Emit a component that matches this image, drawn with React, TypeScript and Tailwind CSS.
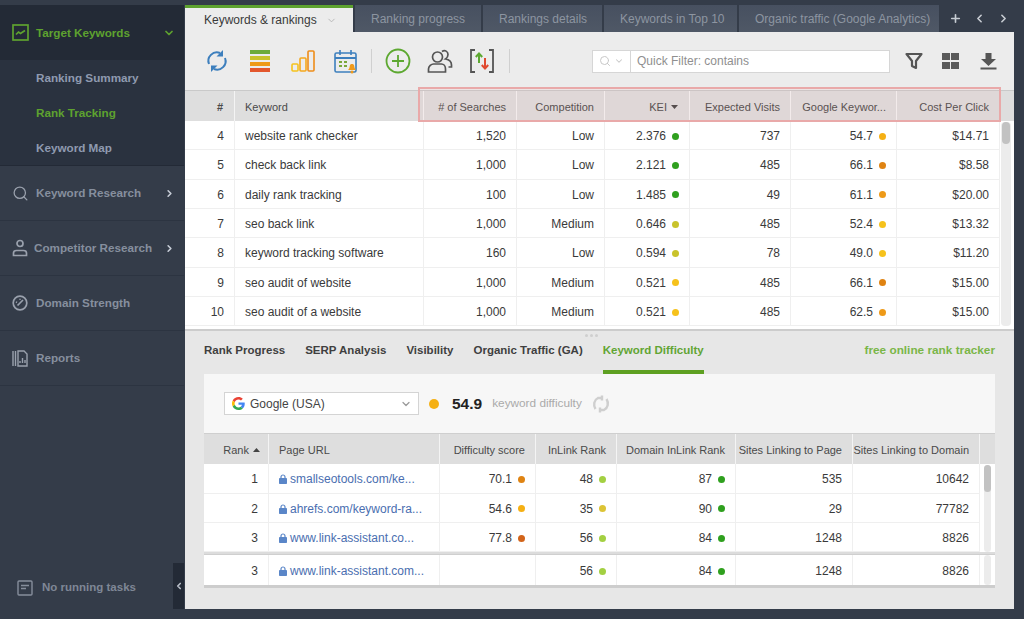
import { ChevronDown, ChevronRight, ChevronLeft, Plus, Search } from 'lucide-react';
import type { ReactNode } from 'react';

const GREEN = 'bg-[#2fa01e]';
const OLIVE = 'bg-[#c9c32c]';
const YELLOW = 'bg-[#f6c21c]';
const AMBER = 'bg-[#f5b014]';
const ORANGE = 'bg-[#ee9a18]';
const DARKORANGE = 'bg-[#df8312]';
const RUST = 'bg-[#d2641a]';
const LIME = 'bg-[#a3d042]';
const MUSTARD = 'bg-[#dcc436]';

const keywords = [
    { n: 4, k: 'website rank checker', s: '1,520', c: 'Low', kei: '2.376', kd: GREEN, v: '737', g: '54.7', gd: AMBER, cpc: '$14.71' },
    { n: 5, k: 'check back link', s: '1,000', c: 'Low', kei: '2.121', kd: GREEN, v: '485', g: '66.1', gd: DARKORANGE, cpc: '$8.58' },
    { n: 6, k: 'daily rank tracking', s: '100', c: 'Low', kei: '1.485', kd: GREEN, v: '49', g: '61.1', gd: ORANGE, cpc: '$20.00' },
    { n: 7, k: 'seo back link', s: '1,000', c: 'Medium', kei: '0.646', kd: OLIVE, v: '485', g: '52.4', gd: YELLOW, cpc: '$13.32' },
    { n: 8, k: 'keyword tracking software', s: '160', c: 'Low', kei: '0.594', kd: OLIVE, v: '78', g: '49.0', gd: YELLOW, cpc: '$11.20' },
    { n: 9, k: 'seo audit of website', s: '1,000', c: 'Medium', kei: '0.521', kd: YELLOW, v: '485', g: '66.1', gd: DARKORANGE, cpc: '$15.00' },
    { n: 10, k: 'seo audit of a website', s: '1,000', c: 'Medium', kei: '0.521', kd: YELLOW, v: '485', g: '62.5', gd: ORANGE, cpc: '$15.00' },
];

const pages = [
    { r: 1, u: 'smallseotools.com/ke...', d: '70.1', dd: DARKORANGE, i: '48', id: LIME, di: '87', p: '535', sd: '10642' },
    { r: 2, u: 'ahrefs.com/keyword-ra...', d: '54.6', dd: AMBER, i: '35', id: MUSTARD, di: '90', p: '29', sd: '77782' },
    { r: 3, u: 'www.link-assistant.co...', d: '77.8', dd: RUST, i: '56', id: LIME, di: '84', p: '1248', sd: '8826' },
];

const Dot = ({ color, size = 'w-[7px] h-[7px]' }: { color: string; size?: string }) => (
    <span className={`inline-block rounded-full ${size} ${color}`} />
);

const Cell = ({ w, children, left, head }: { w: string; children?: ReactNode; left?: boolean; head?: boolean }) => (
    <div
        className={`${w} shrink-0 h-full flex items-center gap-[6px] px-[10px] border-r whitespace-nowrap ${left ? 'justify-start' : 'justify-end'} ${
            head ? 'border-[#f4f4f4] pt-[2px]' : 'border-[#efefef] pt-[2px]'
        }`}
    >
        {children}
    </div>
);

const NavItem = ({ icon, label, arrow, tight }: { icon: ReactNode; label: string; arrow?: boolean; tight?: boolean }) => (
    <div className="h-[55px] flex items-center border-b border-[#2c3441] text-[#868f9e] font-bold">
        <div className="w-[36px] pl-[12px] shrink-0">{icon}</div>
        <span className={`flex-1 whitespace-nowrap ${tight ? '-ml-[2px]' : ''}`}>{label}</span>
        {arrow && <ChevronRight size={11} strokeWidth={3.5} className="mr-[9px] text-[#c6ccd6]" />}
    </div>
);

const Tab = ({ w, label }: { w: string; label: string }) => (
    <div className={`${w} h-[27px] shrink-0 bg-gradient-to-b from-[#475060] to-[#4f5866] text-[#8d95a1] flex items-center pl-[16px] whitespace-nowrap`}>
        {label}
    </div>
);

const Sep = () => <div className="w-px h-[24px] bg-[#d0d0d0]" />;

const LockIcon = () => (
    <svg width="8" height="10" viewBox="0 0 8 10" className="shrink-0 -mr-[3px]">
        <path d="M2 4.500V3a2 2 0 0 1 4 0v1.500" fill="none" stroke="#5a86c8" strokeWidth="1.200" />
        <rect x="0" y="4" width="8" height="6" rx="0.800" fill="#5a86c8" />
    </svg>
);

const Toolbar = () => (
    <div className="h-[58px] flex items-center bg-[#ececec] relative">
        <div className="w-[32px] ml-[16px] flex justify-center">
            <svg width="24" height="24" viewBox="0 0 24 24" fill="none" stroke="#3d7fbd" strokeWidth="2">
                <path d="M4 15a8.500 8.500 0 0 1 11-11" />
                <path d="M20 9a8.500 8.500 0 0 1-11 11" />
                <path d="M18 1v6.500h-6.500z" fill="#3d7fbd" stroke="none" />
                <path d="M6 23v-6.500h6.500z" fill="#3d7fbd" stroke="none" />
            </svg>
        </div>
        <div className="w-[20px] ml-[17px] flex flex-col gap-[2px]">
            <div className="h-[4px] bg-[#6cab3a]" />
            <div className="h-[4px] bg-[#c9c32c]" />
            <div className="h-[4px] bg-[#ee9a18]" />
            <div className="h-[4px] bg-[#e3572d]" />
        </div>
        <div className="ml-[21px] w-[24px]">
            <svg width="24" height="24" viewBox="0 0 24 24" fill="none" strokeWidth="1.600">
                <rect x="1" y="15" width="6" height="7" rx="1" stroke="#f5c21b" />
                <rect x="9" y="9" width="6" height="13" rx="1" stroke="#f5a81b" />
                <rect x="17" y="2" width="6" height="20" rx="1" stroke="#ee8d1a" />
            </svg>
        </div>
        <div className="ml-[19px] w-[24px]">
            <svg width="25" height="25" viewBox="0 0 25 25" fill="none">
                <rect x="1" y="4" width="21" height="19" rx="1.500" stroke="#3d7fbd" strokeWidth="1.600" />
                <path d="M1 9h21" stroke="#3d7fbd" strokeWidth="2" />
                <path d="M6 1v5M17 1v5" stroke="#3d7fbd" strokeWidth="1.600" />
                <path d="M5 12h3v2H5zM10 12h3v2h-3zM5 16h3v2H5zM10 16h3v2h-3z" fill="#7aa73c" />
                <path d="M14 21c1.500-1 1.500-3 2-5 .4-1.500 3.600-1.500 4 0 .5 2 .5 4 2 5z" fill="#ef9a1b" />
                <circle cx="18" cy="23" r="1.500" fill="#ef9a1b" />
            </svg>
        </div>
        <div className="ml-[13px]"><Sep /></div>
        <div className="ml-[13px] w-[26px]">
            <svg width="26" height="26" viewBox="0 0 26 26" fill="none" stroke="#5da831" strokeWidth="1.800">
                <circle cx="13" cy="13" r="11.500" />
                <path d="M13 7v12M7 13h12" />
            </svg>
        </div>
        <div className="ml-[16px] w-[26px]">
            <svg width="26" height="26" viewBox="0 0 26 26" fill="none" stroke="#555" strokeWidth="1.700">
                <circle cx="10.500" cy="9" r="5" />
                <path d="M1.500 24v-3c0-3 3-5 5-5h8c2 0 4 2 4 5v3z" />
                <path d="M15 3.500c3-2 6 0 6 3 0 2-1 3.500-2.500 4.500 3 .5 6 2.500 6 6v2h-3" />
            </svg>
        </div>
        <div className="ml-[16px] w-[26px]">
            <svg width="26" height="26" viewBox="0 0 26 26" fill="none" strokeWidth="2">
                <path d="M6 2H2v22h4M20 2h4v22h-4" stroke="#555" strokeWidth="1.800" />
                <path d="M10 15V5.500M6.800 9l3.200-3.500L13.200 9" stroke="#5da831" />
                <path d="M16 10v10.500M12.800 17l3.200 3.500 3.200-3.500" stroke="#e0492f" />
            </svg>
        </div>
        <div className="ml-[14px]"><Sep /></div>
        <div className="ml-[82px] w-[298px] h-[23px] flex bg-white border border-[#d6d6d6]">
            <div className="w-[38px] flex items-center justify-center gap-[3px] border-r border-[#d6d6d6] text-[#c8c8c8]">
                <Search size={12} strokeWidth={2} />
                <ChevronDown size={10} strokeWidth={2.500} />
            </div>
            <div className="flex items-center pl-[6px] text-[#8f8f8f]">Quick Filter: contains</div>
        </div>
        <div className="ml-[15px] w-[18px]">
            <svg width="18" height="18" viewBox="0 0 18 18" fill="none" stroke="#555" strokeWidth="2.200">
                <path d="M1.500 2h15L11 9v7l-4-2V9z" strokeLinejoin="round" />
            </svg>
        </div>
        <div className="ml-[19px] w-[18px] grid grid-cols-[7.500px_7.500px] grid-rows-[7px_7px] gap-[1.500px]">
            <div className="bg-[#5a5a5a]" /><div className="bg-[#5a5a5a]" /><div className="bg-[#5a5a5a]" /><div className="bg-[#5a5a5a]" />
        </div>
        <div className="ml-[20px] w-[17px]">
            <svg width="17" height="18" viewBox="0 0 17 18" fill="#555">
                <path d="M5.500 1h6v6h4.500l-7.500 7L1 7h4.500z" />
                <rect x="0.500" y="15.500" width="16" height="2" />
            </svg>
        </div>
    </div>
);

const kw = {
    n: 'w-[50px]', k: 'w-[189px]', s: 'w-[93px]', c: 'w-[88px]', kei: 'w-[85px]', v: 'w-[101px]', g: 'w-[106px]', cpc: 'w-[103px]',
};
const pg = {
    r: 'w-[65px]', u: 'w-[171px]', d: 'w-[96px]', i: 'w-[81px]', di: 'w-[119px]', p: 'w-[117px]', sd: 'w-[127px]',
};

const KeywordsTable = () => (
    <div className="relative">
        <div className="h-[31px] flex bg-[#dedede] border-t border-[#c9c9c9] text-[#4a4a4a] text-[11px]">
            <Cell w={kw.n} head><span className="font-bold pr-[1px]">#</span></Cell>
            <Cell w={kw.k} left head>Keyword</Cell>
            <Cell w={kw.s} head>&#35; of Searches</Cell>
            <Cell w={kw.c} head>Competition</Cell>
            <Cell w={kw.kei} head>
                <span>KEI</span>
                <svg width="7" height="4" viewBox="0 0 7 4" className="-ml-[2px] mr-[1px]"><path d="M0 4l3.500-4L7 4z" transform="rotate(180 3.500 2)" fill="#444" /></svg>
            </Cell>
            <Cell w={kw.v} head>Expected Visits</Cell>
            <Cell w={kw.g} head>Google Keywor...</Cell>
            <Cell w={kw.cpc} head>Cost Per Click</Cell>
        </div>
        <div className="absolute left-[233px] top-[-3px] w-[583px] h-[35px] border-2 border-[#e9a9a9] bg-[#e8a0a0]/10" />
        <div className="flex bg-white pb-[3px]">
            <div className="w-[815px]">
                {keywords.map((r) => (
                    <div key={r.n} className="h-[29.33px] flex border-b border-[#efefef] text-[#3a3a3a]">
                        <Cell w={kw.n}>{r.n}</Cell>
                        <Cell w={kw.k} left>{r.k}</Cell>
                        <Cell w={kw.s}>{r.s}</Cell>
                        <Cell w={kw.c}>{r.c}</Cell>
                        <Cell w={kw.kei}>{r.kei}<Dot color={r.kd} /></Cell>
                        <Cell w={kw.v}>{r.v}</Cell>
                        <Cell w={kw.g}>{r.g}<Dot color={r.gd} /></Cell>
                        <Cell w={kw.cpc}>{r.cpc}</Cell>
                    </div>
                ))}
            </div>
            <div className="flex-1 pl-[1px] pr-[3px] pt-[1px]">
                <div className="h-full rounded-[4px] bg-[#ececec]">
                    <div className="h-[22px] rounded-[4px] bg-[#c2c2c2] mx-[1px]" />
                </div>
            </div>
        </div>
    </div>
);

const PageRow = ({ r, u, d, dd, i, id, di, p, sd, tall }: { r: number; u: string; d?: string; dd?: string; i: string; id: string; di: string; p: string; sd: string; tall?: boolean }) => (
    <div className={`${tall ? 'h-[30px]' : 'h-[29.33px] border-b border-[#efefef]'} flex text-[#3a3a3a]`}>
        <Cell w={pg.r}>{r}</Cell>
        <Cell w={pg.u} left>
            <LockIcon />
            <span className="text-[#4a6eb0]">{u}</span>
        </Cell>
        <Cell w={pg.d}>{d}{dd && <Dot color={dd} />}</Cell>
        <Cell w={pg.i}>{i}<Dot color={id} /></Cell>
        <Cell w={pg.di}>{di}<Dot color={GREEN} /></Cell>
        <Cell w={pg.p}>{p}</Cell>
        <Cell w={pg.sd}>{sd}</Cell>
    </div>
);

const DifficultyCard = () => (
    <div className="mx-[19px] bg-[#f7f7f7]">
        <div className="h-[59px] flex items-center pl-[20px]">
            <div className="w-[195px] h-[23px] bg-white border border-[#d4d4d4] flex items-center pl-[7px]">
                <svg width="13" height="13" viewBox="0 0 48 48">
                    <path fill="#ea4335" d="M24 9.500c3.500 0 6.700 1.300 9.100 3.400l6.800-6.800C35.800 2.400 30.300 0 24 0 14.600 0 6.500 5.400 2.600 13.200l7.900 6.100C12.400 13.600 17.700 9.500 24 9.500z" />
                    <path fill="#4285f4" d="M47 24.500c0-1.600-.1-3.100-.4-4.500H24v9h12.900c-.6 3-2.300 5.500-4.800 7.200l7.700 6C44.300 38 47 31.800 47 24.500z" />
                    <path fill="#fbbc05" d="M10.500 28.700A14.500 14.500 0 0 1 10.500 19.300l-7.900-6.100a24 24 0 0 0 0 21.600z" />
                    <path fill="#34a853" d="M24 48c6.500 0 11.900-2.100 15.800-5.800l-7.700-6c-2.100 1.400-4.900 2.300-8.100 2.300-6.300 0-11.600-4.200-13.500-9.800l-7.900 6.100C6.500 42.600 14.600 48 24 48z" />
                </svg>
                <span className="ml-[5px] flex-1 text-[#444]">Google (USA)</span>
                <ChevronDown size={12} strokeWidth={2.500} className="mr-[6px] text-[#9a9a9a]" />
            </div>
            <Dot color={AMBER} size="w-[10px] h-[10px] ml-[10px]" />
            <span className="ml-[13px] text-[15.500px] font-bold text-[#222]">54.9</span>
            <span className="ml-[10px] text-[#aaaaaa] text-[11.800px]">keyword difficulty</span>
            <div className="ml-[10px]">
                <svg width="18" height="18" viewBox="0 0 18 18" fill="none" stroke="#cfcfcf" strokeWidth="2.400">
                    <path d="M3.500 14C1 10 2 5 6 3h4" />
                    <path d="M14.500 4c2.500 4 1.500 9-2.500 11H8" />
                    <path d="M10 .5v5M8 12.500v5" />
                </svg>
            </div>
        </div>
        <div className="h-[31px] flex bg-[#dedede] border-t border-[#cfcfcf] text-[#4a4a4a] text-[11px]">
            <Cell w={pg.r} head>
                <span>Rank</span>
                <svg width="7" height="4" viewBox="0 0 7 4" className="-ml-[2px] -mr-[2px]"><path d="M0 4l3.500-4L7 4z" fill="#444" /></svg>
            </Cell>
            <Cell w={pg.u} left head>Page URL</Cell>
            <Cell w={pg.d} head>Difficulty score</Cell>
            <Cell w={pg.i} head>InLink Rank</Cell>
            <Cell w={pg.di} head>Domain InLink Rank</Cell>
            <Cell w={pg.p} head>Sites Linking to Page</Cell>
            <Cell w={pg.sd} head>Sites Linking to Domain</Cell>
        </div>
        <div className="flex bg-white">
            <div className="w-[776px]">
                {pages.map((p) => <PageRow key={p.r} {...p} />)}
            </div>
            <div className="flex-1 pl-[4px] pr-[4px] pt-[1px]">
                <div className="h-[87px] rounded-[4px] bg-[#ececec]">
                    <div className="h-[27px] rounded-[4px] bg-[#c2c2c2]" />
                </div>
            </div>
        </div>
        <div className="h-[3px] bg-[#dcdcdc] border-b border-[#cfcfcf]" />
        <div className="flex bg-white border-b-[3px] border-[#cdcdcd]">
            <div className="w-[776px]">
                <PageRow tall r={3} u="www.link-assistant.com..." i="56" id={LIME} di="84" p="1248" sd="8826" />
            </div>
            <div className="flex-1 pl-[4px] pr-[4px]">
                <div className="h-full rounded-[4px] bg-[#ececec]" />
            </div>
        </div>
    </div>
);

export default function App() {
    return (
        <div className="w-[1024px] h-[619px] flex bg-[#343c49] overflow-hidden text-[12px] font-['Liberation_Sans',Arial,sans-serif]">
            <aside className="w-[184px] shrink-0 relative flex flex-col pt-[5px] text-[11.700px]">
                <div className="h-[55px] bg-[#232a36] flex items-center font-bold text-[#5ea22f]">
                    <div className="w-[36px] pl-[12px] shrink-0">
                        <svg width="17" height="17" viewBox="0 0 17 17" fill="none" stroke="#5ea22f" strokeWidth="1.700">
                            <rect x="1" y="1" width="15" height="15" />
                            <path d="M4 10.500l2.500-2.500 2 1.500L13 6.500" />
                        </svg>
                    </div>
                    <span className="flex-1 whitespace-nowrap">Target Keywords</span>
                    <ChevronDown size={12} strokeWidth={3.500} className="mr-[9px]" />
                </div>
                <div className="h-[106px] bg-[#2a323f] flex flex-col justify-center gap-[17.500px] pl-[36px] font-bold text-[#8f9ab0] border-b border-[#232a36]">
                    <span>Ranking Summary</span>
                    <span className="text-[#5ea22f]">Rank Tracking</span>
                    <span>Keyword Map</span>
                </div>
                <NavItem
                    label="Keyword Research"
                    arrow
                    icon={<Search size={17} strokeWidth={1.800} className="text-[#9aa1ad]" />}
                />
                <NavItem
                    label="Competitor Research"
                    arrow
                    tight
                    icon={
                        <svg width="16" height="18" viewBox="0 0 16 18" fill="none" stroke="#9aa1ad" strokeWidth="1.700" className="-mt-[1px]">
                            <circle cx="8" cy="4.500" r="3" />
                            <path d="M1.500 16.500v-2.500c0-1.500 1.500-2.500 3-2.500h7c1.500 0 3 1 3 2.500v2.500z" />
                        </svg>
                    }
                />
                <NavItem
                    label="Domain Strength"
                    icon={
                        <svg width="16" height="16" viewBox="0 0 16 16" fill="none" stroke="#9aa1ad" strokeWidth="1.700">
                            <circle cx="8" cy="8" r="6.800" />
                            <path d="M5.500 10.500L11 5M4 7l1 .5M8 3.800v1" />
                        </svg>
                    }
                />
                <NavItem
                    label="Reports"
                    icon={
                        <svg width="16" height="17" viewBox="0 0 16 17" fill="none" stroke="#9aa1ad" strokeWidth="1.400">
                            <path d="M1 1v15M3.500 1v15" />
                            <path d="M6 1h6l3 3v12H6z" />
                            <path d="M8 13v-2M10.500 13V8M13 13v-3" />
                        </svg>
                    }
                />
                <div className="mt-auto h-[62px] flex items-center pl-[17px] pb-[1px] font-bold text-[#7f8796] gap-[9px] text-[11.500px]">
                    <svg width="16" height="16" viewBox="0 0 16 16" fill="none" stroke="#868e9c" strokeWidth="1.400">
                        <rect x="1" y="1" width="14" height="14" rx="1" />
                        <path d="M4 5.500h8M4 8.500h5" />
                    </svg>
                    <span className="whitespace-nowrap">No running tasks</span>
                </div>
                <div className="absolute right-0 bottom-[10px] w-[11px] h-[46px] bg-[#232a36] flex items-center justify-center">
                    <ChevronLeft size={10} strokeWidth={4} className="text-[#b8bec8]" />
                </div>
            </aside>

            <main className="w-[829px] ml-px flex flex-col pt-[5px] pb-[10px]">
                <div className="h-[27px] flex gap-[2px] shrink-0">
                    <div className="w-[168px] h-[27px] bg-[#ececec] border-t-[3px] border-[#5ea22f] flex items-center pl-[19px] text-[#3a3a3a]">
                        Keywords &amp; rankings
                        <ChevronDown size={11} className="ml-[9px] text-[#b5b5b5]" />
                    </div>
                    <Tab w="w-[126px]" label="Ranking progress" />
                    <Tab w="w-[119px]" label="Rankings details" />
                    <Tab w="w-[133px]" label="Keywords in Top 10" />
                    <Tab w="w-[200px]" label="Organic traffic (Google Analytics)" />
                    <div className="flex items-center text-[#c7ccd3] ml-[8px] gap-[11px]">
                        <Plus size={13} strokeWidth={3} />
                        <ChevronLeft size={13} strokeWidth={3} />
                        <ChevronRight size={13} strokeWidth={3} />
                    </div>
                </div>
                <Toolbar />
                <KeywordsTable />
                <div className="flex-1 bg-[#e7e7e7] border-t-2 border-[#cccccc] relative">
                    <div className="absolute left-[400px] top-[3px] flex gap-[2px]">
                        <span className="w-[3px] h-[3px] rounded-full bg-[#cfcfcf]" />
                        <span className="w-[3px] h-[3px] rounded-full bg-[#cfcfcf]" />
                        <span className="w-[3px] h-[3px] rounded-full bg-[#cfcfcf]" />
                    </div>
                    <div className="h-[43px] flex items-stretch px-[19px] gap-[20px] font-bold text-[#3f3f3f] text-[11.500px]">
                        <span className="flex items-center border-b-4 border-transparent">Rank Progress</span>
                        <span className="flex items-center border-b-4 border-transparent">SERP Analysis</span>
                        <span className="flex items-center border-b-4 border-transparent">Visibility</span>
                        <span className="flex items-center border-b-4 border-transparent">Organic Traffic (GA)</span>
                        <span className="flex items-center text-[#62a534] border-b-4 border-[#5ea022]">Keyword Difficulty</span>
                        <span className="ml-auto flex items-center text-[#7ab648] border-b-4 border-transparent text-[11.800px]">free online rank tracker</span>
                    </div>
                    <DifficultyCard />
                </div>
            </main>
        </div>
    );
}
